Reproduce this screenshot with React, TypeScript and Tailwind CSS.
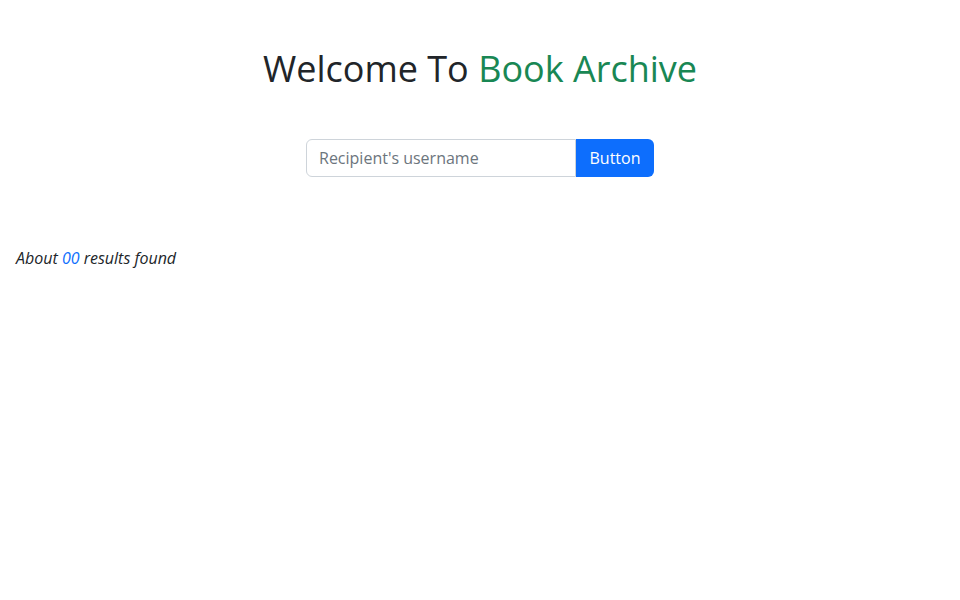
import React, { useState } from 'react';

const App: React.FC = () => {
  const [query, setQuery] = useState<string>('');
  const count = '00';

  return (
    <div className="min-h-[600px] bg-white text-[#212529] font-['Open_Sans',sans-serif]">
      <div className="pt-[47px] text-center">
        <h1 className="text-[36px] leading-[44px] font-normal">
          Welcome To <span className="text-[#198754]">Book Archive</span>
        </h1>
      </div>

      <div className="mt-[48px] flex justify-center">
        <div className="flex w-[348px]">
          <input
            type="text"
            value={query}
            onChange={(e) => setQuery(e.target.value)}
            placeholder="Recipient's username"
            className="w-[270px] h-[38px] px-3 text-base text-[#212529] placeholder:text-[#6c757d] border border-[#ced4da] rounded-l-[6px] outline-none"
          />
          <button
            type="button"
            className="w-[78px] h-[38px] bg-[#0d6efd] text-white text-base rounded-r-[6px]"
          >
            Button
          </button>
        </div>
      </div>

      <div className="mt-[69px] px-4">
        <p className="italic text-base leading-6">
          About <span className="text-[#0d6efd]">{count}</span> results found
        </p>
      </div>
    </div>
  );
};

export default App;
